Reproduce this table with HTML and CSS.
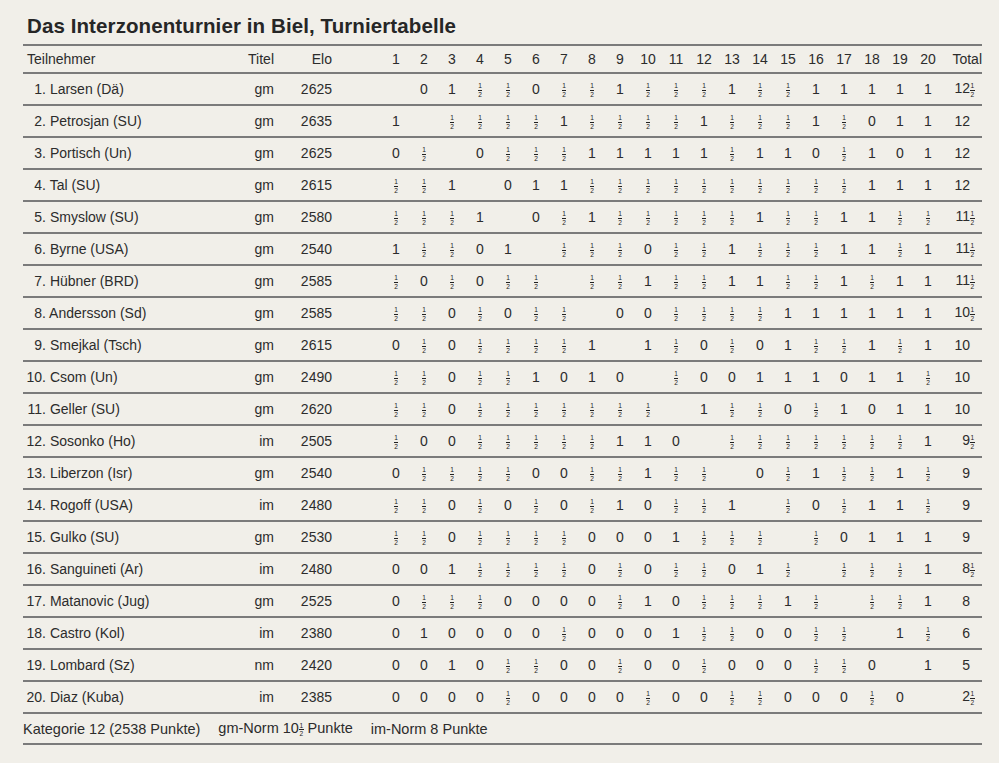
FILE: index.html
```html
<!DOCTYPE html>
<html lang="de">
<head>
<meta charset="utf-8">
<title>Das Interzonenturnier in Biel, Turniertabelle</title>
<link rel="stylesheet" href="styles.css">
</head>
<body>
<div class="sheet">
<h1 class="title">Das Interzonenturnier in Biel, Turniertabelle</h1>
<div class="table">
<div class="row head"><span class="name">Teilnehmer</span><span class="ti">Titel</span><span class="elo">Elo</span><span class="c">1</span><span class="c">2</span><span class="c">3</span><span class="c">4</span><span class="c">5</span><span class="c">6</span><span class="c">7</span><span class="c">8</span><span class="c">9</span><span class="c">10</span><span class="c">11</span><span class="c">12</span><span class="c">13</span><span class="c">14</span><span class="c">15</span><span class="c">16</span><span class="c">17</span><span class="c">18</span><span class="c">19</span><span class="c">20</span><span class="tot">Total</span></div>

<div class="row"><span class="name"><span class="rk">1.</span> Larsen (Dä)</span><span class="ti">gm</span><span class="elo">2625</span><span class="c"></span><span class="c">0</span><span class="c">1</span><span class="c"><span class="h"><sup>1</sup><sub>2</sub></span></span><span class="c"><span class="h"><sup>1</sup><sub>2</sub></span></span><span class="c">0</span><span class="c"><span class="h"><sup>1</sup><sub>2</sub></span></span><span class="c"><span class="h"><sup>1</sup><sub>2</sub></span></span><span class="c">1</span><span class="c"><span class="h"><sup>1</sup><sub>2</sub></span></span><span class="c"><span class="h"><sup>1</sup><sub>2</sub></span></span><span class="c"><span class="h"><sup>1</sup><sub>2</sub></span></span><span class="c">1</span><span class="c"><span class="h"><sup>1</sup><sub>2</sub></span></span><span class="c"><span class="h"><sup>1</sup><sub>2</sub></span></span><span class="c">1</span><span class="c">1</span><span class="c">1</span><span class="c">1</span><span class="c">1</span><span class="tot"><span class="int">12</span><span class="h"><sup>1</sup><sub>2</sub></span></span></div>

<div class="row"><span class="name"><span class="rk">2.</span> Petrosjan (SU)</span><span class="ti">gm</span><span class="elo">2635</span><span class="c">1</span><span class="c"></span><span class="c"><span class="h"><sup>1</sup><sub>2</sub></span></span><span class="c"><span class="h"><sup>1</sup><sub>2</sub></span></span><span class="c"><span class="h"><sup>1</sup><sub>2</sub></span></span><span class="c"><span class="h"><sup>1</sup><sub>2</sub></span></span><span class="c">1</span><span class="c"><span class="h"><sup>1</sup><sub>2</sub></span></span><span class="c"><span class="h"><sup>1</sup><sub>2</sub></span></span><span class="c"><span class="h"><sup>1</sup><sub>2</sub></span></span><span class="c"><span class="h"><sup>1</sup><sub>2</sub></span></span><span class="c">1</span><span class="c"><span class="h"><sup>1</sup><sub>2</sub></span></span><span class="c"><span class="h"><sup>1</sup><sub>2</sub></span></span><span class="c"><span class="h"><sup>1</sup><sub>2</sub></span></span><span class="c">1</span><span class="c"><span class="h"><sup>1</sup><sub>2</sub></span></span><span class="c">0</span><span class="c">1</span><span class="c">1</span><span class="tot"><span class="int">12</span></span></div>

<div class="row"><span class="name"><span class="rk">3.</span> Portisch (Un)</span><span class="ti">gm</span><span class="elo">2625</span><span class="c">0</span><span class="c"><span class="h"><sup>1</sup><sub>2</sub></span></span><span class="c"></span><span class="c">0</span><span class="c"><span class="h"><sup>1</sup><sub>2</sub></span></span><span class="c"><span class="h"><sup>1</sup><sub>2</sub></span></span><span class="c"><span class="h"><sup>1</sup><sub>2</sub></span></span><span class="c">1</span><span class="c">1</span><span class="c">1</span><span class="c">1</span><span class="c">1</span><span class="c"><span class="h"><sup>1</sup><sub>2</sub></span></span><span class="c">1</span><span class="c">1</span><span class="c">0</span><span class="c"><span class="h"><sup>1</sup><sub>2</sub></span></span><span class="c">1</span><span class="c">0</span><span class="c">1</span><span class="tot"><span class="int">12</span></span></div>

<div class="row"><span class="name"><span class="rk">4.</span> Tal (SU)</span><span class="ti">gm</span><span class="elo">2615</span><span class="c"><span class="h"><sup>1</sup><sub>2</sub></span></span><span class="c"><span class="h"><sup>1</sup><sub>2</sub></span></span><span class="c">1</span><span class="c"></span><span class="c">0</span><span class="c">1</span><span class="c">1</span><span class="c"><span class="h"><sup>1</sup><sub>2</sub></span></span><span class="c"><span class="h"><sup>1</sup><sub>2</sub></span></span><span class="c"><span class="h"><sup>1</sup><sub>2</sub></span></span><span class="c"><span class="h"><sup>1</sup><sub>2</sub></span></span><span class="c"><span class="h"><sup>1</sup><sub>2</sub></span></span><span class="c"><span class="h"><sup>1</sup><sub>2</sub></span></span><span class="c"><span class="h"><sup>1</sup><sub>2</sub></span></span><span class="c"><span class="h"><sup>1</sup><sub>2</sub></span></span><span class="c"><span class="h"><sup>1</sup><sub>2</sub></span></span><span class="c"><span class="h"><sup>1</sup><sub>2</sub></span></span><span class="c">1</span><span class="c">1</span><span class="c">1</span><span class="tot"><span class="int">12</span></span></div>

<div class="row"><span class="name"><span class="rk">5.</span> Smyslow (SU)</span><span class="ti">gm</span><span class="elo">2580</span><span class="c"><span class="h"><sup>1</sup><sub>2</sub></span></span><span class="c"><span class="h"><sup>1</sup><sub>2</sub></span></span><span class="c"><span class="h"><sup>1</sup><sub>2</sub></span></span><span class="c">1</span><span class="c"></span><span class="c">0</span><span class="c"><span class="h"><sup>1</sup><sub>2</sub></span></span><span class="c">1</span><span class="c"><span class="h"><sup>1</sup><sub>2</sub></span></span><span class="c"><span class="h"><sup>1</sup><sub>2</sub></span></span><span class="c"><span class="h"><sup>1</sup><sub>2</sub></span></span><span class="c"><span class="h"><sup>1</sup><sub>2</sub></span></span><span class="c"><span class="h"><sup>1</sup><sub>2</sub></span></span><span class="c">1</span><span class="c"><span class="h"><sup>1</sup><sub>2</sub></span></span><span class="c"><span class="h"><sup>1</sup><sub>2</sub></span></span><span class="c">1</span><span class="c">1</span><span class="c"><span class="h"><sup>1</sup><sub>2</sub></span></span><span class="c"><span class="h"><sup>1</sup><sub>2</sub></span></span><span class="tot"><span class="int">11</span><span class="h"><sup>1</sup><sub>2</sub></span></span></div>

<div class="row"><span class="name"><span class="rk">6.</span> Byrne (USA)</span><span class="ti">gm</span><span class="elo">2540</span><span class="c">1</span><span class="c"><span class="h"><sup>1</sup><sub>2</sub></span></span><span class="c"><span class="h"><sup>1</sup><sub>2</sub></span></span><span class="c">0</span><span class="c">1</span><span class="c"></span><span class="c"><span class="h"><sup>1</sup><sub>2</sub></span></span><span class="c"><span class="h"><sup>1</sup><sub>2</sub></span></span><span class="c"><span class="h"><sup>1</sup><sub>2</sub></span></span><span class="c">0</span><span class="c"><span class="h"><sup>1</sup><sub>2</sub></span></span><span class="c"><span class="h"><sup>1</sup><sub>2</sub></span></span><span class="c">1</span><span class="c"><span class="h"><sup>1</sup><sub>2</sub></span></span><span class="c"><span class="h"><sup>1</sup><sub>2</sub></span></span><span class="c"><span class="h"><sup>1</sup><sub>2</sub></span></span><span class="c">1</span><span class="c">1</span><span class="c"><span class="h"><sup>1</sup><sub>2</sub></span></span><span class="c">1</span><span class="tot"><span class="int">11</span><span class="h"><sup>1</sup><sub>2</sub></span></span></div>

<div class="row"><span class="name"><span class="rk">7.</span> Hübner (BRD)</span><span class="ti">gm</span><span class="elo">2585</span><span class="c"><span class="h"><sup>1</sup><sub>2</sub></span></span><span class="c">0</span><span class="c"><span class="h"><sup>1</sup><sub>2</sub></span></span><span class="c">0</span><span class="c"><span class="h"><sup>1</sup><sub>2</sub></span></span><span class="c"><span class="h"><sup>1</sup><sub>2</sub></span></span><span class="c"></span><span class="c"><span class="h"><sup>1</sup><sub>2</sub></span></span><span class="c"><span class="h"><sup>1</sup><sub>2</sub></span></span><span class="c">1</span><span class="c"><span class="h"><sup>1</sup><sub>2</sub></span></span><span class="c"><span class="h"><sup>1</sup><sub>2</sub></span></span><span class="c">1</span><span class="c">1</span><span class="c"><span class="h"><sup>1</sup><sub>2</sub></span></span><span class="c"><span class="h"><sup>1</sup><sub>2</sub></span></span><span class="c">1</span><span class="c"><span class="h"><sup>1</sup><sub>2</sub></span></span><span class="c">1</span><span class="c">1</span><span class="tot"><span class="int">11</span><span class="h"><sup>1</sup><sub>2</sub></span></span></div>

<div class="row"><span class="name"><span class="rk">8.</span> Andersson (Sd)</span><span class="ti">gm</span><span class="elo">2585</span><span class="c"><span class="h"><sup>1</sup><sub>2</sub></span></span><span class="c"><span class="h"><sup>1</sup><sub>2</sub></span></span><span class="c">0</span><span class="c"><span class="h"><sup>1</sup><sub>2</sub></span></span><span class="c">0</span><span class="c"><span class="h"><sup>1</sup><sub>2</sub></span></span><span class="c"><span class="h"><sup>1</sup><sub>2</sub></span></span><span class="c"></span><span class="c">0</span><span class="c">0</span><span class="c"><span class="h"><sup>1</sup><sub>2</sub></span></span><span class="c"><span class="h"><sup>1</sup><sub>2</sub></span></span><span class="c"><span class="h"><sup>1</sup><sub>2</sub></span></span><span class="c"><span class="h"><sup>1</sup><sub>2</sub></span></span><span class="c">1</span><span class="c">1</span><span class="c">1</span><span class="c">1</span><span class="c">1</span><span class="c">1</span><span class="tot"><span class="int">10</span><span class="h"><sup>1</sup><sub>2</sub></span></span></div>

<div class="row"><span class="name"><span class="rk">9.</span> Smejkal (Tsch)</span><span class="ti">gm</span><span class="elo">2615</span><span class="c">0</span><span class="c"><span class="h"><sup>1</sup><sub>2</sub></span></span><span class="c">0</span><span class="c"><span class="h"><sup>1</sup><sub>2</sub></span></span><span class="c"><span class="h"><sup>1</sup><sub>2</sub></span></span><span class="c"><span class="h"><sup>1</sup><sub>2</sub></span></span><span class="c"><span class="h"><sup>1</sup><sub>2</sub></span></span><span class="c">1</span><span class="c"></span><span class="c">1</span><span class="c"><span class="h"><sup>1</sup><sub>2</sub></span></span><span class="c">0</span><span class="c"><span class="h"><sup>1</sup><sub>2</sub></span></span><span class="c">0</span><span class="c">1</span><span class="c"><span class="h"><sup>1</sup><sub>2</sub></span></span><span class="c"><span class="h"><sup>1</sup><sub>2</sub></span></span><span class="c">1</span><span class="c"><span class="h"><sup>1</sup><sub>2</sub></span></span><span class="c">1</span><span class="tot"><span class="int">10</span></span></div>

<div class="row"><span class="name"><span class="rk">10.</span> Csom (Un)</span><span class="ti">gm</span><span class="elo">2490</span><span class="c"><span class="h"><sup>1</sup><sub>2</sub></span></span><span class="c"><span class="h"><sup>1</sup><sub>2</sub></span></span><span class="c">0</span><span class="c"><span class="h"><sup>1</sup><sub>2</sub></span></span><span class="c"><span class="h"><sup>1</sup><sub>2</sub></span></span><span class="c">1</span><span class="c">0</span><span class="c">1</span><span class="c">0</span><span class="c"></span><span class="c"><span class="h"><sup>1</sup><sub>2</sub></span></span><span class="c">0</span><span class="c">0</span><span class="c">1</span><span class="c">1</span><span class="c">1</span><span class="c">0</span><span class="c">1</span><span class="c">1</span><span class="c"><span class="h"><sup>1</sup><sub>2</sub></span></span><span class="tot"><span class="int">10</span></span></div>

<div class="row"><span class="name"><span class="rk">11.</span> Geller (SU)</span><span class="ti">gm</span><span class="elo">2620</span><span class="c"><span class="h"><sup>1</sup><sub>2</sub></span></span><span class="c"><span class="h"><sup>1</sup><sub>2</sub></span></span><span class="c">0</span><span class="c"><span class="h"><sup>1</sup><sub>2</sub></span></span><span class="c"><span class="h"><sup>1</sup><sub>2</sub></span></span><span class="c"><span class="h"><sup>1</sup><sub>2</sub></span></span><span class="c"><span class="h"><sup>1</sup><sub>2</sub></span></span><span class="c"><span class="h"><sup>1</sup><sub>2</sub></span></span><span class="c"><span class="h"><sup>1</sup><sub>2</sub></span></span><span class="c"><span class="h"><sup>1</sup><sub>2</sub></span></span><span class="c"></span><span class="c">1</span><span class="c"><span class="h"><sup>1</sup><sub>2</sub></span></span><span class="c"><span class="h"><sup>1</sup><sub>2</sub></span></span><span class="c">0</span><span class="c"><span class="h"><sup>1</sup><sub>2</sub></span></span><span class="c">1</span><span class="c">0</span><span class="c">1</span><span class="c">1</span><span class="tot"><span class="int">10</span></span></div>

<div class="row"><span class="name"><span class="rk">12.</span> Sosonko (Ho)</span><span class="ti">im</span><span class="elo">2505</span><span class="c"><span class="h"><sup>1</sup><sub>2</sub></span></span><span class="c">0</span><span class="c">0</span><span class="c"><span class="h"><sup>1</sup><sub>2</sub></span></span><span class="c"><span class="h"><sup>1</sup><sub>2</sub></span></span><span class="c"><span class="h"><sup>1</sup><sub>2</sub></span></span><span class="c"><span class="h"><sup>1</sup><sub>2</sub></span></span><span class="c"><span class="h"><sup>1</sup><sub>2</sub></span></span><span class="c">1</span><span class="c">1</span><span class="c">0</span><span class="c"></span><span class="c"><span class="h"><sup>1</sup><sub>2</sub></span></span><span class="c"><span class="h"><sup>1</sup><sub>2</sub></span></span><span class="c"><span class="h"><sup>1</sup><sub>2</sub></span></span><span class="c"><span class="h"><sup>1</sup><sub>2</sub></span></span><span class="c"><span class="h"><sup>1</sup><sub>2</sub></span></span><span class="c"><span class="h"><sup>1</sup><sub>2</sub></span></span><span class="c"><span class="h"><sup>1</sup><sub>2</sub></span></span><span class="c">1</span><span class="tot"><span class="int">9</span><span class="h"><sup>1</sup><sub>2</sub></span></span></div>

<div class="row"><span class="name"><span class="rk">13.</span> Liberzon (Isr)</span><span class="ti">gm</span><span class="elo">2540</span><span class="c">0</span><span class="c"><span class="h"><sup>1</sup><sub>2</sub></span></span><span class="c"><span class="h"><sup>1</sup><sub>2</sub></span></span><span class="c"><span class="h"><sup>1</sup><sub>2</sub></span></span><span class="c"><span class="h"><sup>1</sup><sub>2</sub></span></span><span class="c">0</span><span class="c">0</span><span class="c"><span class="h"><sup>1</sup><sub>2</sub></span></span><span class="c"><span class="h"><sup>1</sup><sub>2</sub></span></span><span class="c">1</span><span class="c"><span class="h"><sup>1</sup><sub>2</sub></span></span><span class="c"><span class="h"><sup>1</sup><sub>2</sub></span></span><span class="c"></span><span class="c">0</span><span class="c"><span class="h"><sup>1</sup><sub>2</sub></span></span><span class="c">1</span><span class="c"><span class="h"><sup>1</sup><sub>2</sub></span></span><span class="c"><span class="h"><sup>1</sup><sub>2</sub></span></span><span class="c">1</span><span class="c"><span class="h"><sup>1</sup><sub>2</sub></span></span><span class="tot"><span class="int">9</span></span></div>

<div class="row"><span class="name"><span class="rk">14.</span> Rogoff (USA)</span><span class="ti">im</span><span class="elo">2480</span><span class="c"><span class="h"><sup>1</sup><sub>2</sub></span></span><span class="c"><span class="h"><sup>1</sup><sub>2</sub></span></span><span class="c">0</span><span class="c"><span class="h"><sup>1</sup><sub>2</sub></span></span><span class="c">0</span><span class="c"><span class="h"><sup>1</sup><sub>2</sub></span></span><span class="c">0</span><span class="c"><span class="h"><sup>1</sup><sub>2</sub></span></span><span class="c">1</span><span class="c">0</span><span class="c"><span class="h"><sup>1</sup><sub>2</sub></span></span><span class="c"><span class="h"><sup>1</sup><sub>2</sub></span></span><span class="c">1</span><span class="c"></span><span class="c"><span class="h"><sup>1</sup><sub>2</sub></span></span><span class="c">0</span><span class="c"><span class="h"><sup>1</sup><sub>2</sub></span></span><span class="c">1</span><span class="c">1</span><span class="c"><span class="h"><sup>1</sup><sub>2</sub></span></span><span class="tot"><span class="int">9</span></span></div>

<div class="row"><span class="name"><span class="rk">15.</span> Gulko (SU)</span><span class="ti">gm</span><span class="elo">2530</span><span class="c"><span class="h"><sup>1</sup><sub>2</sub></span></span><span class="c"><span class="h"><sup>1</sup><sub>2</sub></span></span><span class="c">0</span><span class="c"><span class="h"><sup>1</sup><sub>2</sub></span></span><span class="c"><span class="h"><sup>1</sup><sub>2</sub></span></span><span class="c"><span class="h"><sup>1</sup><sub>2</sub></span></span><span class="c"><span class="h"><sup>1</sup><sub>2</sub></span></span><span class="c">0</span><span class="c">0</span><span class="c">0</span><span class="c">1</span><span class="c"><span class="h"><sup>1</sup><sub>2</sub></span></span><span class="c"><span class="h"><sup>1</sup><sub>2</sub></span></span><span class="c"><span class="h"><sup>1</sup><sub>2</sub></span></span><span class="c"></span><span class="c"><span class="h"><sup>1</sup><sub>2</sub></span></span><span class="c">0</span><span class="c">1</span><span class="c">1</span><span class="c">1</span><span class="tot"><span class="int">9</span></span></div>

<div class="row"><span class="name"><span class="rk">16.</span> Sanguineti (Ar)</span><span class="ti">im</span><span class="elo">2480</span><span class="c">0</span><span class="c">0</span><span class="c">1</span><span class="c"><span class="h"><sup>1</sup><sub>2</sub></span></span><span class="c"><span class="h"><sup>1</sup><sub>2</sub></span></span><span class="c"><span class="h"><sup>1</sup><sub>2</sub></span></span><span class="c"><span class="h"><sup>1</sup><sub>2</sub></span></span><span class="c">0</span><span class="c"><span class="h"><sup>1</sup><sub>2</sub></span></span><span class="c">0</span><span class="c"><span class="h"><sup>1</sup><sub>2</sub></span></span><span class="c"><span class="h"><sup>1</sup><sub>2</sub></span></span><span class="c">0</span><span class="c">1</span><span class="c"><span class="h"><sup>1</sup><sub>2</sub></span></span><span class="c"></span><span class="c"><span class="h"><sup>1</sup><sub>2</sub></span></span><span class="c"><span class="h"><sup>1</sup><sub>2</sub></span></span><span class="c"><span class="h"><sup>1</sup><sub>2</sub></span></span><span class="c">1</span><span class="tot"><span class="int">8</span><span class="h"><sup>1</sup><sub>2</sub></span></span></div>

<div class="row"><span class="name"><span class="rk">17.</span> Matanovic (Jug)</span><span class="ti">gm</span><span class="elo">2525</span><span class="c">0</span><span class="c"><span class="h"><sup>1</sup><sub>2</sub></span></span><span class="c"><span class="h"><sup>1</sup><sub>2</sub></span></span><span class="c"><span class="h"><sup>1</sup><sub>2</sub></span></span><span class="c">0</span><span class="c">0</span><span class="c">0</span><span class="c">0</span><span class="c"><span class="h"><sup>1</sup><sub>2</sub></span></span><span class="c">1</span><span class="c">0</span><span class="c"><span class="h"><sup>1</sup><sub>2</sub></span></span><span class="c"><span class="h"><sup>1</sup><sub>2</sub></span></span><span class="c"><span class="h"><sup>1</sup><sub>2</sub></span></span><span class="c">1</span><span class="c"><span class="h"><sup>1</sup><sub>2</sub></span></span><span class="c"></span><span class="c"><span class="h"><sup>1</sup><sub>2</sub></span></span><span class="c"><span class="h"><sup>1</sup><sub>2</sub></span></span><span class="c">1</span><span class="tot"><span class="int">8</span></span></div>

<div class="row"><span class="name"><span class="rk">18.</span> Castro (Kol)</span><span class="ti">im</span><span class="elo">2380</span><span class="c">0</span><span class="c">1</span><span class="c">0</span><span class="c">0</span><span class="c">0</span><span class="c">0</span><span class="c"><span class="h"><sup>1</sup><sub>2</sub></span></span><span class="c">0</span><span class="c">0</span><span class="c">0</span><span class="c">1</span><span class="c"><span class="h"><sup>1</sup><sub>2</sub></span></span><span class="c"><span class="h"><sup>1</sup><sub>2</sub></span></span><span class="c">0</span><span class="c">0</span><span class="c"><span class="h"><sup>1</sup><sub>2</sub></span></span><span class="c"><span class="h"><sup>1</sup><sub>2</sub></span></span><span class="c"></span><span class="c">1</span><span class="c"><span class="h"><sup>1</sup><sub>2</sub></span></span><span class="tot"><span class="int">6</span></span></div>

<div class="row"><span class="name"><span class="rk">19.</span> Lombard (Sz)</span><span class="ti">nm</span><span class="elo">2420</span><span class="c">0</span><span class="c">0</span><span class="c">1</span><span class="c">0</span><span class="c"><span class="h"><sup>1</sup><sub>2</sub></span></span><span class="c"><span class="h"><sup>1</sup><sub>2</sub></span></span><span class="c">0</span><span class="c">0</span><span class="c"><span class="h"><sup>1</sup><sub>2</sub></span></span><span class="c">0</span><span class="c">0</span><span class="c"><span class="h"><sup>1</sup><sub>2</sub></span></span><span class="c">0</span><span class="c">0</span><span class="c">0</span><span class="c"><span class="h"><sup>1</sup><sub>2</sub></span></span><span class="c"><span class="h"><sup>1</sup><sub>2</sub></span></span><span class="c">0</span><span class="c"></span><span class="c">1</span><span class="tot"><span class="int">5</span></span></div>

<div class="row"><span class="name"><span class="rk">20.</span> Diaz (Kuba)</span><span class="ti">im</span><span class="elo">2385</span><span class="c">0</span><span class="c">0</span><span class="c">0</span><span class="c">0</span><span class="c"><span class="h"><sup>1</sup><sub>2</sub></span></span><span class="c">0</span><span class="c">0</span><span class="c">0</span><span class="c">0</span><span class="c"><span class="h"><sup>1</sup><sub>2</sub></span></span><span class="c">0</span><span class="c">0</span><span class="c"><span class="h"><sup>1</sup><sub>2</sub></span></span><span class="c"><span class="h"><sup>1</sup><sub>2</sub></span></span><span class="c">0</span><span class="c">0</span><span class="c">0</span><span class="c"><span class="h"><sup>1</sup><sub>2</sub></span></span><span class="c">0</span><span class="c"></span><span class="tot"><span class="int">2</span><span class="h"><sup>1</sup><sub>2</sub></span></span></div>

<div class="foot"><span>Kategorie 12 (2538 Punkte)</span><span>gm-Norm 10<span class="h"><sup>1</sup><sub>2</sub></span> Punkte</span><span>im-Norm 8 Punkte</span></div>
</div>
</div>
</body>
</html>
```

FILE: styles.css
```css
html, body {
  margin: 0;
  background: #f1efe9;
}

body {
  color: #2c2c2c;
  font-family: "Liberation Sans", Arial, sans-serif;
  font-size: 14px;
  line-height: 16px;
}

.sheet {
  width: 959px;
  margin-left: 23px;
}

.title {
  margin: 0;
  padding: 14px 0 6px 4px;
  font-size: 20.5px;
  line-height: 24px;
  letter-spacing: 0.1px;
  font-weight: bold;
  color: #262626;
}

.table {
  border-top: 2px solid #7b7b7b;
}

.row {
  display: grid;
  grid-template-columns: 207px 46px 106px repeat(20, 28px) 40px;
  align-items: center;
  height: 32px;
  box-sizing: border-box;
  border-bottom: 2px solid #7b7b7b;
}

.head {
  height: 28px;
}

.head .name {
  padding-left: 4px;
}

.rk {
  display: inline-block;
  width: 23px;
  text-align: right;
}

.ti {
  text-align: right;
  padding-right: 2px;
}

.elo {
  text-align: right;
  padding-right: 50px;
}

.c {
  text-align: center;
}

.tot {
  white-space: nowrap;
}

.head .tot {
  text-align: right;
}

.int {
  display: inline-block;
  width: 28px;
  text-align: right;
}

.h {
  display: inline-block;
  vertical-align: -3.5px;
  font-size: 6.6px;
  line-height: 7.4px;
  text-align: center;
  color: #222;
}

.h sup,
.h sub {
  display: block;
  font-size: inherit;
  line-height: 7.4px;
  vertical-align: baseline;
  padding: 0 0.5px;
}

.h sup {
  border-bottom: 1px solid currentColor;
}

.foot {
  display: flex;
  align-items: center;
  gap: 18px;
  height: 31px;
  box-sizing: border-box;
  font-size: 14.5px;
  border-bottom: 2px solid #7b7b7b;
}
```
